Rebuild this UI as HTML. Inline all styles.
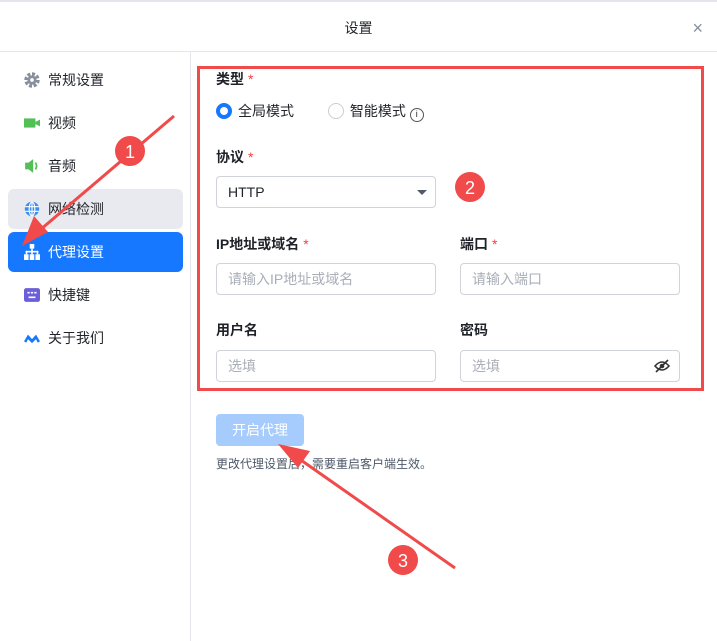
<!DOCTYPE html><html><head><meta charset="utf-8"><style>
*{box-sizing:border-box;margin:0;padding:0}
body{width:717px;height:641px;background:#fff;font-family:"Liberation Sans","Noto Sans CJK SC",sans-serif;position:relative;overflow:hidden;color:#1f2329}
.hdr{position:absolute;left:0;top:0;width:717px;height:52px;border-top:2px solid #e5e6eb;border-bottom:1px solid #e5e6eb;text-align:center;line-height:52px;font-size:14px}
.x{position:absolute;right:14px;top:0;color:#86909c;font-size:18px}
.side{position:absolute;left:0;top:52px;width:191px;height:589px;border-right:1px solid #e5e6eb}
.it{position:absolute;left:8px;width:175px;height:40px;border-radius:6px;font-size:14px;line-height:40px;padding-left:40px}
.ic{position:absolute;left:16px;top:12px;width:16px;height:16px}
.lbl{position:absolute;font-size:14px;font-weight:bold}
.st{color:#f53f3f;font-weight:normal;margin-left:4px}
.inp{position:absolute;height:32px;border:1px solid #d0d3d9;border-radius:4px;font-size:14px;line-height:30px;padding-left:11px;color:#a9aeb8}
</style></head><body>
<div class="hdr">设置<span class="x">×</span></div>
<div class="side">
<div class="it" style="top:8px"><svg class="ic" viewBox="0 0 14 14"><circle cx="7" cy="7" r="5" fill="none" stroke="#86909c" stroke-width="3.5" stroke-dasharray="2.5 1.4"/><circle cx="7" cy="7" r="4" fill="#86909c"/><circle cx="7" cy="7" r="1.6" fill="#fff"/></svg>常规设置</div>
<div class="it" style="top:51px"><svg class="ic" viewBox="0 0 14 14"><rect x="0" y="3" width="10" height="8" fill="#52c057"/><path d="M10 6l4-2v6l-4-2z" fill="#52c057"/></svg>视频</div>
<div class="it" style="top:94px"><svg class="ic" viewBox="0 0 14 14"><path d="M1 4h3l4-3v12l-4-3H1z" fill="#52c057"/><path d="M10 4q2 3 0 6" stroke="#52c057" fill="none" stroke-width="1.5"/></svg>音频</div>
<div class="it" style="top:137px;background:#e9eaef"><svg class="ic" viewBox="0 0 14 14"><circle cx="7" cy="7" r="6.3" fill="#3b8cf0"/><g stroke="#fff" stroke-width="1" fill="none"><ellipse cx="7" cy="7" rx="2.5" ry="6"/><path d="M1 5h12M1 9h12M7 1v12"/></g></svg>网络检测</div>
<div class="it" style="top:180px;background:#1677ff;color:#fff"><svg class="ic" viewBox="0 0 14 14" fill="#fff"><rect x="5" y="0" width="4" height="4"/><rect x="6.3" y="4" width="1.4" height="3"/><rect x="1.5" y="6" width="11" height="1.4"/><rect x="1.5" y="6" width="1.4" height="3"/><rect x="11.1" y="6" width="1.4" height="3"/><rect x="6.3" y="6" width="1.4" height="3"/><rect x="0" y="9" width="4" height="5"/><rect x="5" y="9" width="4" height="5"/><rect x="10" y="9" width="4" height="5"/></svg>代理设置</div>
<div class="it" style="top:223px"><svg class="ic" viewBox="0 0 14 14"><rect x="0" y="1" width="14" height="12" rx="2" fill="#6b5ed8"/><path d="M3 5h2M6 5h2M9 5h2M4 9h6" stroke="#fff" stroke-width="1.4"/></svg>快捷键</div>
<div class="it" style="top:266px"><svg class="ic" viewBox="0 0 14 14"><path d="M0 10l3.5-6 3.5 4 3.5-4 3.5 6-2 1-1.5-3-3.5 3.5-3.5-3.5-1.5 3z" fill="#1677ff"/></svg>关于我们</div>
</div>
<div class="lbl" style="left:216px;top:69px">类型<span class="st">*</span></div>
<div style="position:absolute;left:216px;top:102px;font-size:14px;line-height:18px">
<span style="display:inline-block;width:16px;height:16px;border:4.5px solid #1677ff;border-radius:50%;vertical-align:-3px;margin-right:6px"></span>全局模式
<span style="display:inline-block;width:16px;height:16px;border:1px solid #c9cdd4;border-radius:50%;vertical-align:-3px;margin:0 6px 0 30px"></span>智能模式 <span style="display:inline-block;width:14px;height:14px;border:1.3px solid #555;border-radius:50%;font-size:9px;line-height:11px;text-align:center;vertical-align:-1px">i</span></div>
<div class="lbl" style="left:216px;top:147px">协议<span class="st">*</span></div>
<div class="inp" style="left:216px;top:176px;width:220px;color:#1f2329">HTTP<span style="position:absolute;right:8px;top:13px;border:5px solid transparent;border-top:5px solid #4e5969"></span></div>
<div class="lbl" style="left:216px;top:234px">IP地址或域名<span class="st">*</span></div>
<div class="lbl" style="left:460px;top:234px">端口<span class="st">*</span></div>
<div class="inp" style="left:216px;top:263px;width:220px">请输入IP地址或域名</div>
<div class="inp" style="left:460px;top:263px;width:220px">请输入端口</div>
<div class="lbl" style="left:216px;top:320px">用户名</div>
<div class="lbl" style="left:460px;top:320px">密码</div>
<div class="inp" style="left:216px;top:350px;width:220px">选填</div>
<div class="inp" style="left:460px;top:350px;width:220px">选填<svg style="position:absolute;right:9px;top:8px" width="16" height="14" viewBox="0 0 16 14"><path d="M1 7q7-8 14 0q-7 8-14 0z" fill="none" stroke="#333" stroke-width="1.6"/><circle cx="8" cy="7" r="2.3" fill="#333"/><path d="M2 13L14 1" stroke="#333" stroke-width="1.6"/></svg></div>
<div style="position:absolute;left:216px;top:414px;width:88px;height:32px;background:#a6cbfd;border-radius:4px;color:#fff;font-size:14px;text-align:center;line-height:32px">开启代理</div>
<div style="position:absolute;left:216px;top:455px;font-size:12px;color:#4e5969">更改代理设置后，需要重启客户端生效。</div>
<svg style="position:absolute;left:0;top:0" width="717" height="641">
<rect x="198.5" y="67.5" width="504" height="322" fill="none" stroke="#f04a4a" stroke-width="3"/>
<g stroke="#f04a4a" stroke-width="3" fill="#f04a4a">
<line x1="174" y1="116" x2="40" y2="230"/><path d="M22 246l12-30 14 16z" stroke="none"/>
<line x1="455" y1="568" x2="298" y2="458"/><path d="M278 444l32 7-12 17z" stroke="none"/>
</g>
<g fill="#f04a4a"><circle cx="130" cy="151" r="15"/><circle cx="470" cy="187" r="15"/><circle cx="403" cy="560" r="15"/></g>
<g fill="#fff" font-size="18" text-anchor="middle" font-family="Liberation Sans"><text x="130" y="158">1</text><text x="470" y="194">2</text><text x="403" y="567">3</text></g>
</svg>
</body></html>
